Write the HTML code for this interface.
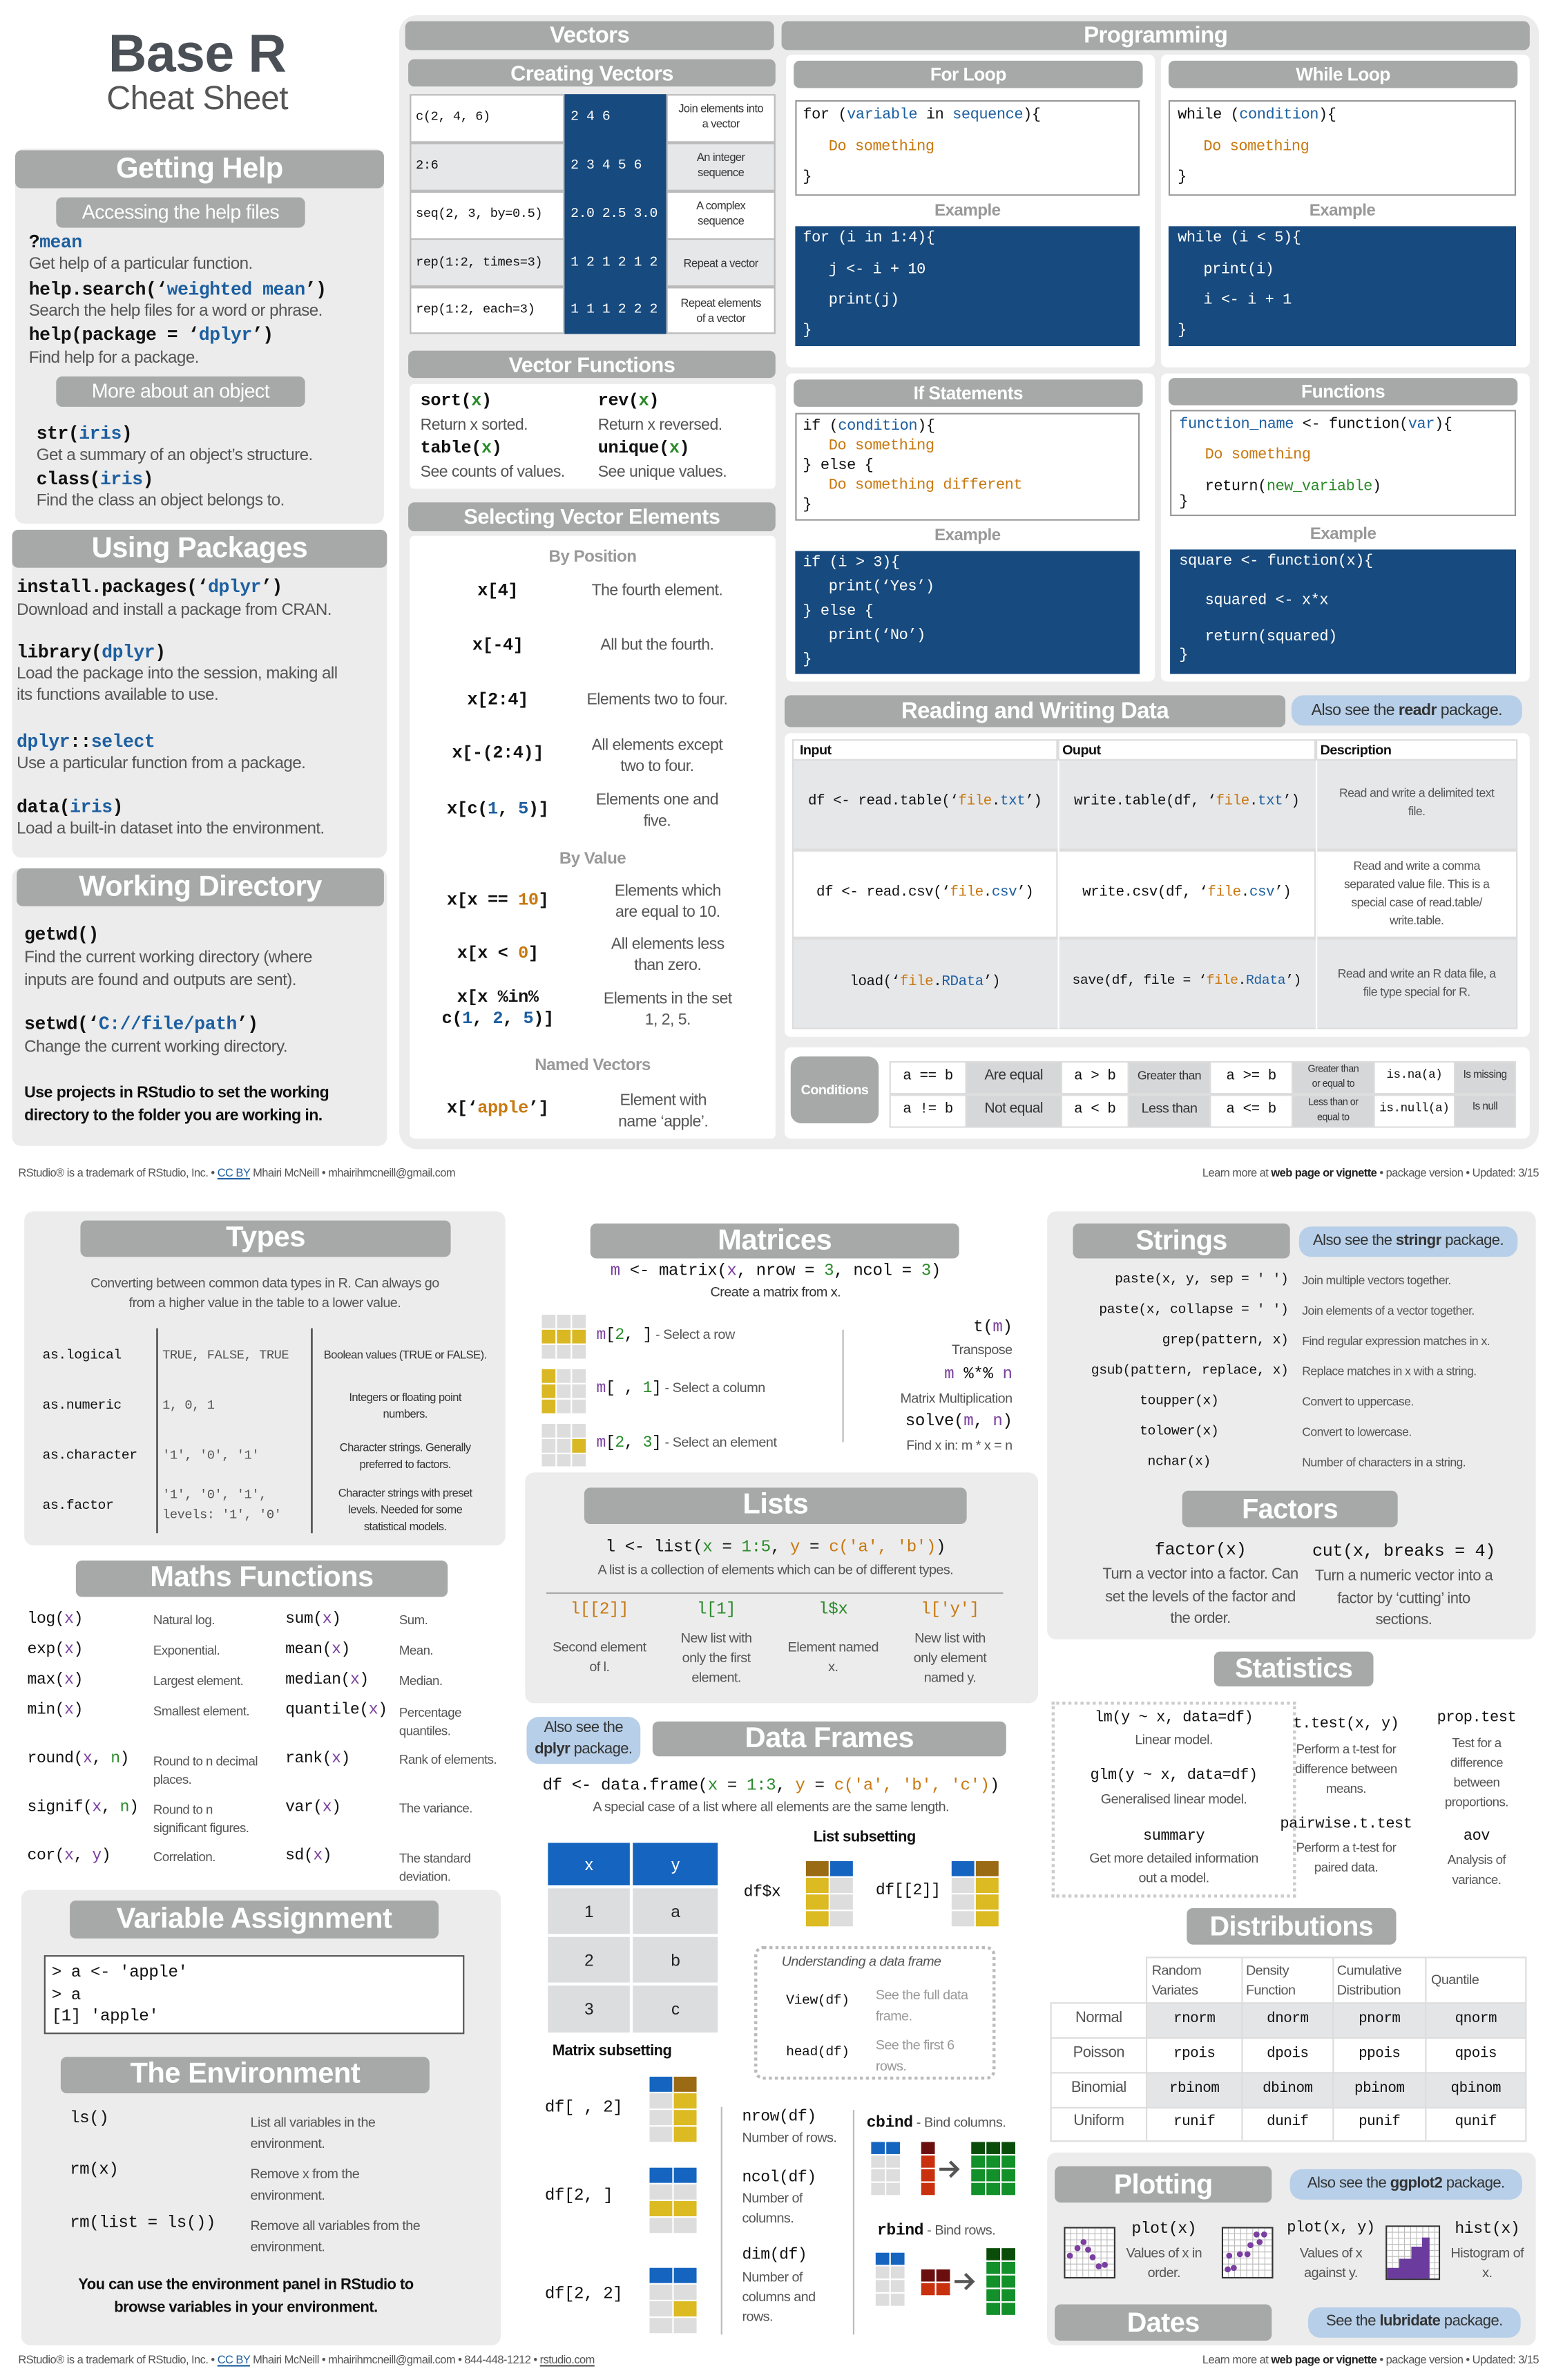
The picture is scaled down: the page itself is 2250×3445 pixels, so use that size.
<!DOCTYPE html>
<html><head><meta charset="utf-8">
<style>
html,body{margin:0;padding:0;background:#fff;width:2250px;height:3445px;overflow:hidden}
#r{position:absolute;left:0;top:0;width:1024px;height:1568px;transform:scale(2.197266);transform-origin:0 0;font-family:"Liberation Sans Narrow","Liberation Sans",sans-serif;color:#333;letter-spacing:-0.25px}
#r div{position:absolute;white-space:nowrap}
.h{background:#a6a9a8;color:#fff;font-weight:bold;text-align:center;border-radius:4px}
.p{background:#ececec;border-radius:6px}
.w{background:#fff}
.c{font-family:"Liberation Mono",monospace;color:#111;letter-spacing:-0.2px}
.d{color:#555}
.b{color:#1d5fa0}.g{color:#2a8a2a}.o{color:#c8780f}.pu{color:#7a3f9e}
.cen{text-align:center}
.see{background:#b7cfe8;border-radius:8px;color:#333;text-align:center}
.bl{background:#174a7e;color:#fff;font-family:"Liberation Mono",monospace}
</style></head><body><div id="r">

<!-- Title -->
<div style="left:40px;top:16px;width:180px;text-align:center;font-size:35px;font-weight:bold;color:#4b5057;font-family:'Liberation Sans',sans-serif">Base R</div>
<div style="left:40px;top:52px;width:180px;text-align:center;font-size:22px;color:#555">Cheat Sheet</div>

<!-- Getting Help -->
<div class="p" style="left:10px;top:98px;width:243px;height:247px"></div>
<div class="h" style="left:10px;top:99px;width:243px;height:25px;font-size:19px;line-height:25px">Getting Help</div>
<div class="h" style="left:37px;top:130px;width:164px;height:20px;font-size:13px;line-height:20px;font-weight:normal">Accessing the help files</div>
<div class="c" style="left:19px;top:153px;font-size:12px;font-weight:bold">?<span class="b">mean</span></div>
<div class="d" style="left:19px;top:168px;font-size:11px">Get help of a particular function.</div>
<div class="c" style="left:19px;top:184px;font-size:12px;font-weight:bold">help.search(‘<span class="b">weighted mean</span>’)</div>
<div class="d" style="left:19px;top:199px;font-size:11px">Search the help files for a word or phrase.</div>
<div class="c" style="left:19px;top:214px;font-size:12px;font-weight:bold">help(package = ‘<span class="b">dplyr</span>’)</div>
<div class="d" style="left:19px;top:230px;font-size:11px">Find help for a package.</div>
<div class="h" style="left:37px;top:248px;width:164px;height:20px;font-size:13px;line-height:20px;font-weight:normal">More about an object</div>
<div class="c" style="left:24px;top:279px;font-size:12px;font-weight:bold">str(<span class="b">iris</span>)</div>
<div class="d" style="left:24px;top:294px;font-size:11px">Get a summary of an object’s structure.</div>
<div class="c" style="left:24px;top:309px;font-size:12px;font-weight:bold">class(<span class="b">iris</span>)</div>
<div class="d" style="left:24px;top:324px;font-size:11px">Find the class an object belongs to.</div>

<!-- Using Packages -->
<div class="p" style="left:8px;top:349px;width:247px;height:216px"></div>
<div class="h" style="left:8px;top:349px;width:247px;height:25px;font-size:19px;line-height:25px">Using Packages</div>
<div class="c" style="left:11px;top:380px;font-size:12px;font-weight:bold">install.packages(‘<span class="b">dplyr</span>’)</div>
<div class="d" style="left:11px;top:396px;font-size:11px">Download and install a package from CRAN.</div>
<div class="c" style="left:11px;top:423px;font-size:12px;font-weight:bold">library(<span class="b">dplyr</span>)</div>
<div class="d" style="left:11px;top:438px;font-size:11px">Load the package into the session, making all</div>
<div class="d" style="left:11px;top:452px;font-size:11px">its functions available to use.</div>
<div class="c" style="left:11px;top:482px;font-size:12px;font-weight:bold"><span class="b">dplyr</span>::<span class="b">select</span></div>
<div class="d" style="left:11px;top:497px;font-size:11px">Use a particular function from a package.</div>
<div class="c" style="left:11px;top:525px;font-size:12px;font-weight:bold">data(<span class="b">iris</span>)</div>
<div class="d" style="left:11px;top:540px;font-size:11px">Load a built-in dataset into the environment.</div>

<!-- Working Directory -->
<div class="p" style="left:8px;top:572px;width:247px;height:183px"></div>
<div class="h" style="left:11px;top:572px;width:242px;height:25px;font-size:19px;line-height:25px">Working Directory</div>
<div class="c" style="left:16px;top:609px;font-size:12px;font-weight:bold">getwd()</div>
<div class="d" style="left:16px;top:625px;font-size:11px">Find the current working directory (where</div>
<div class="d" style="left:16px;top:640px;font-size:11px">inputs are found and outputs are sent).</div>
<div class="c" style="left:16px;top:668px;font-size:12px;font-weight:bold">setwd(‘<span class="b">C://file/path</span>’)</div>
<div class="d" style="left:16px;top:684px;font-size:11px">Change the current working directory.</div>
<div style="left:16px;top:714px;font-size:10.5px;font-weight:bold;color:#111;font-family:'Liberation Sans',sans-serif">Use projects in RStudio to set the working</div>
<div style="left:16px;top:729px;font-size:10.5px;font-weight:bold;color:#111;font-family:'Liberation Sans',sans-serif">directory to the folder you are working in.</div>

<!-- Big right panel -->
<div class="p" style="left:263px;top:10px;width:751px;height:747px;border-radius:12px"></div>
<div class="h" style="left:267px;top:14px;width:243px;height:19px;font-size:15px;line-height:19px">Vectors</div>
<div class="h" style="left:515px;top:14px;width:493px;height:19px;font-size:15px;line-height:19px">Programming</div>
<div class="h" style="left:269px;top:39px;width:242px;height:18px;font-size:14px;line-height:18px">Creating Vectors</div>

<!-- creating vectors table -->
<div style="left:270px;top:62px;width:241px;height:158px;background:#bbb"></div>
<div class="w" style="left:271px;top:63px;width:100px;height:30px"></div>
<div style="left:271px;top:95px;width:100px;height:30px;background:#e6e7e9"></div>
<div class="w" style="left:271px;top:127px;width:100px;height:30px"></div>
<div style="left:271px;top:158px;width:100px;height:30px;background:#e6e7e9"></div>
<div class="w" style="left:271px;top:190px;width:100px;height:29px"></div>
<div style="left:372px;top:62px;width:67px;height:158px;background:#174a7e"></div>
<div class="w" style="left:440px;top:63px;width:70px;height:30px"></div>
<div style="left:440px;top:95px;width:70px;height:30px;background:#e6e7e9"></div>
<div class="w" style="left:440px;top:127px;width:70px;height:30px"></div>
<div style="left:440px;top:158px;width:70px;height:30px;background:#e6e7e9"></div>
<div class="w" style="left:440px;top:190px;width:70px;height:29px"></div>
<div class="c" style="left:274px;top:72px;font-size:8.5px">c(2, 4, 6)</div>
<div class="c" style="left:274px;top:104px;font-size:8.5px">2:6</div>
<div class="c" style="left:274px;top:136px;font-size:8.5px">seq(2, 3, by=0.5)</div>
<div class="c" style="left:274px;top:168px;font-size:8.5px">rep(1:2, times=3)</div>
<div class="c" style="left:274px;top:199px;font-size:8.5px">rep(1:2, each=3)</div>
<div class="c" style="left:376px;top:72px;font-size:9px;color:#fff">2 4 6</div>
<div class="c" style="left:376px;top:104px;font-size:9px;color:#fff">2 3 4 5 6</div>
<div class="c" style="left:376px;top:136px;font-size:9px;color:#fff">2.0 2.5 3.0</div>
<div class="c" style="left:376px;top:168px;font-size:9px;color:#fff">1 2 1 2 1 2</div>
<div class="c" style="left:376px;top:199px;font-size:9px;color:#fff">1 1 1 2 2 2</div>
<div class="cen" style="left:440px;top:67px;width:70px;font-size:7.5px;line-height:10px">Join elements into<br>a vector</div>
<div class="cen" style="left:440px;top:99px;width:70px;font-size:7.5px;line-height:10px">An integer<br>sequence</div>
<div class="cen" style="left:440px;top:131px;width:70px;font-size:7.5px;line-height:10px">A complex<br>sequence</div>
<div class="cen" style="left:440px;top:169px;width:70px;font-size:7.5px">Repeat a vector</div>
<div class="cen" style="left:440px;top:195px;width:70px;font-size:7.5px;line-height:10px">Repeat elements<br>of a vector</div>

<!-- vector functions -->
<div class="h" style="left:269px;top:231px;width:242px;height:18px;font-size:14px;line-height:18px">Vector Functions</div>
<div class="w" style="left:270px;top:253px;width:241px;height:69px;border-radius:3px"></div>
<div class="c" style="left:277px;top:258px;font-size:11.5px;font-weight:bold">sort(<span class="g">x</span>)</div>
<div class="d" style="left:277px;top:274px;font-size:10.5px">Return x sorted.</div>
<div class="c" style="left:277px;top:289px;font-size:11.5px;font-weight:bold">table(<span class="g">x</span>)</div>
<div class="d" style="left:277px;top:305px;font-size:10.5px">See counts of values.</div>
<div class="c" style="left:394px;top:258px;font-size:11.5px;font-weight:bold">rev(<span class="g">x</span>)</div>
<div class="d" style="left:394px;top:274px;font-size:10.5px">Return x reversed.</div>
<div class="c" style="left:394px;top:289px;font-size:11.5px;font-weight:bold">unique(<span class="g">x</span>)</div>
<div class="d" style="left:394px;top:305px;font-size:10.5px">See unique values.</div>

<!-- selecting -->
<div class="h" style="left:269px;top:331px;width:242px;height:19px;font-size:14px;line-height:19px">Selecting Vector Elements</div>
<div class="w" style="left:270px;top:353px;width:241px;height:397px;border-radius:3px"></div>
<div class="cen" style="left:270px;top:361px;width:241px;font-size:11px;font-weight:bold;color:#999">By Position</div>
<div class="c cen" style="left:270px;top:383px;width:116px;font-size:11.5px;font-weight:bold">x[4]</div>
<div class="cen d" style="left:378px;top:383px;width:110px;font-size:10.5px">The fourth element.</div>
<div class="c cen" style="left:270px;top:419px;width:116px;font-size:11.5px;font-weight:bold">x[-4]</div>
<div class="cen d" style="left:378px;top:419px;width:110px;font-size:10.5px">All but the fourth.</div>
<div class="c cen" style="left:270px;top:455px;width:116px;font-size:11.5px;font-weight:bold">x[2:4]</div>
<div class="cen d" style="left:378px;top:455px;width:110px;font-size:10.5px">Elements two to four.</div>
<div class="c cen" style="left:270px;top:490px;width:116px;font-size:11.5px;font-weight:bold">x[-(2:4)]</div>
<div class="cen d" style="left:378px;top:484px;width:110px;font-size:10.5px;line-height:14px">All elements except<br>two to four.</div>
<div class="c cen" style="left:270px;top:527px;width:116px;font-size:11.5px;font-weight:bold">x[c(<span class="b">1</span>, <span class="b">5</span>)]</div>
<div class="cen d" style="left:378px;top:520px;width:110px;font-size:10.5px;line-height:14px">Elements one and<br>five.</div>
<div class="cen" style="left:270px;top:560px;width:241px;font-size:11px;font-weight:bold;color:#999">By Value</div>
<div class="c cen" style="left:270px;top:587px;width:116px;font-size:11.5px;font-weight:bold">x[x == <span class="o">10</span>]</div>
<div class="cen d" style="left:385px;top:580px;width:110px;font-size:10.5px;line-height:14px">Elements which<br>are equal to 10.</div>
<div class="c cen" style="left:270px;top:622px;width:116px;font-size:11.5px;font-weight:bold">x[x &lt; <span class="o">0</span>]</div>
<div class="cen d" style="left:385px;top:615px;width:110px;font-size:10.5px;line-height:14px">All elements less<br>than zero.</div>
<div class="c cen" style="left:270px;top:651px;width:116px;font-size:11.5px;font-weight:bold;line-height:14px">x[x %in%<br>c(<span class="b">1</span>, <span class="b">2</span>, <span class="b">5</span>)]</div>
<div class="cen d" style="left:385px;top:651px;width:110px;font-size:10.5px;line-height:14px">Elements in the set<br>1, 2, 5.</div>
<div class="cen" style="left:270px;top:696px;width:241px;font-size:11px;font-weight:bold;color:#999">Named Vectors</div>
<div class="c cen" style="left:270px;top:724px;width:116px;font-size:11.5px;font-weight:bold">x[‘<span class="o">apple</span>’]</div>
<div class="cen d" style="left:382px;top:718px;width:110px;font-size:10.5px;line-height:14px">Element with<br>name ‘apple’.</div>

<!-- Programming panels -->
<div class="w" style="left:518px;top:36px;width:243px;height:206px;border-radius:4px"></div>
<div class="w" style="left:765px;top:36px;width:243px;height:206px;border-radius:4px"></div>
<div class="w" style="left:518px;top:246px;width:243px;height:203px;border-radius:4px"></div>
<div class="w" style="left:765px;top:246px;width:243px;height:203px;border-radius:4px"></div>

<div class="h" style="left:523px;top:40px;width:230px;height:18px;font-size:12px;line-height:18px">For Loop</div>
<div style="left:524px;top:66px;width:225px;height:61px;border:1px solid #999"></div>
<div class="c" style="left:529px;top:71px;font-size:10px">for (<span class="b">variable</span> in <span class="b">sequence</span>){</div>
<div class="c o" style="left:546px;top:92px;font-size:10px">Do something</div>
<div class="c" style="left:529px;top:112px;font-size:10px">}</div>
<div class="cen" style="left:524px;top:133px;width:227px;font-size:11px;font-weight:bold;color:#999">Example</div>
<div class="bl" style="left:524px;top:149px;width:227px;height:79px"></div>
<div class="c" style="left:529px;top:152px;font-size:10px;color:#fff">for (i in 1:4){</div>
<div class="c" style="left:546px;top:173px;font-size:10px;color:#fff">j &lt;- i + 10</div>
<div class="c" style="left:546px;top:193px;font-size:10px;color:#fff">print(j)</div>
<div class="c" style="left:529px;top:213px;font-size:10px;color:#fff">}</div>

<div class="h" style="left:770px;top:40px;width:230px;height:18px;font-size:12px;line-height:18px">While Loop</div>
<div style="left:770px;top:66px;width:227px;height:61px;border:1px solid #999"></div>
<div class="c" style="left:776px;top:71px;font-size:10px">while (<span class="b">condition</span>){</div>
<div class="c o" style="left:793px;top:92px;font-size:10px">Do something</div>
<div class="c" style="left:776px;top:112px;font-size:10px">}</div>
<div class="cen" style="left:770px;top:133px;width:229px;font-size:11px;font-weight:bold;color:#999">Example</div>
<div class="bl" style="left:770px;top:149px;width:229px;height:79px"></div>
<div class="c" style="left:776px;top:152px;font-size:10px;color:#fff">while (i &lt; 5){</div>
<div class="c" style="left:793px;top:173px;font-size:10px;color:#fff">print(i)</div>
<div class="c" style="left:793px;top:193px;font-size:10px;color:#fff">i &lt;- i + 1</div>
<div class="c" style="left:776px;top:213px;font-size:10px;color:#fff">}</div>

<div class="h" style="left:523px;top:250px;width:230px;height:18px;font-size:12px;line-height:18px">If Statements</div>
<div style="left:524px;top:272px;width:225px;height:69px;border:1px solid #999"></div>
<div class="c" style="left:529px;top:276px;font-size:10px">if (<span class="b">condition</span>){</div>
<div class="c o" style="left:546px;top:289px;font-size:10px">Do something</div>
<div class="c" style="left:529px;top:302px;font-size:10px">} else {</div>
<div class="c o" style="left:546px;top:315px;font-size:10px">Do something different</div>
<div class="c" style="left:529px;top:328px;font-size:10px">}</div>
<div class="cen" style="left:524px;top:347px;width:227px;font-size:11px;font-weight:bold;color:#999">Example</div>
<div class="bl" style="left:524px;top:363px;width:227px;height:81px"></div>
<div class="c" style="left:529px;top:366px;font-size:10px;color:#fff">if (i &gt; 3){</div>
<div class="c" style="left:546px;top:382px;font-size:10px;color:#fff">print(‘Yes’)</div>
<div class="c" style="left:529px;top:398px;font-size:10px;color:#fff">} else {</div>
<div class="c" style="left:546px;top:414px;font-size:10px;color:#fff">print(‘No’)</div>
<div class="c" style="left:529px;top:430px;font-size:10px;color:#fff">}</div>

<div class="h" style="left:770px;top:249px;width:230px;height:18px;font-size:12px;line-height:18px">Functions</div>
<div style="left:771px;top:270px;width:226px;height:68px;border:1px solid #999"></div>
<div class="c" style="left:777px;top:275px;font-size:10px"><span class="b">function_name</span> &lt;- function(<span class="b">var</span>){</div>
<div class="c o" style="left:794px;top:295px;font-size:10px">Do something</div>
<div class="c" style="left:794px;top:316px;font-size:10px">return(<span class="g">new_variable</span>)</div>
<div class="c" style="left:777px;top:326px;font-size:10px">}</div>
<div class="cen" style="left:771px;top:346px;width:228px;font-size:11px;font-weight:bold;color:#999">Example</div>
<div class="bl" style="left:771px;top:362px;width:228px;height:82px"></div>
<div class="c" style="left:777px;top:365px;font-size:10px;color:#fff">square &lt;- function(x){</div>
<div class="c" style="left:794px;top:391px;font-size:10px;color:#fff">squared &lt;- x*x</div>
<div class="c" style="left:794px;top:415px;font-size:10px;color:#fff">return(squared)</div>
<div class="c" style="left:777px;top:427px;font-size:10px;color:#fff">}</div>

<!-- Reading and Writing -->
<div class="w" style="left:517px;top:483px;width:491px;height:200px;border-radius:4px"></div>
<div class="h" style="left:517px;top:458px;width:330px;height:21px;font-size:15px;line-height:21px">Reading and Writing Data</div>
<div class="see" style="left:851px;top:458px;width:152px;height:20px;font-size:10.5px;line-height:20px">Also see the <b>readr</b> package.</div>
<div style="left:522px;top:487px;width:478px;height:191px;background:#ddd"></div>
<div class="w" style="left:523px;top:488px;width:173px;height:12px"></div>
<div class="w" style="left:698px;top:488px;width:168px;height:12px"></div>
<div class="w" style="left:868px;top:488px;width:131px;height:12px"></div>
<div style="left:523px;top:501px;width:476px;height:58px;background:#e6e7e9"></div>
<div class="w" style="left:523px;top:561px;width:173px;height:56px"></div>
<div class="w" style="left:698px;top:561px;width:168px;height:56px"></div>
<div class="w" style="left:868px;top:561px;width:131px;height:56px"></div>
<div style="left:523px;top:619px;width:476px;height:58px;background:#e6e7e9"></div>
<div style="left:697px;top:501px;width:1px;height:177px;background:#fff"></div>
<div style="left:867px;top:501px;width:1px;height:177px;background:#fff"></div>
<div style="left:527px;top:489px;font-size:9px;font-weight:bold;color:#111">Input</div>
<div style="left:700px;top:489px;font-size:9px;font-weight:bold;color:#111">Ouput</div>
<div style="left:870px;top:489px;font-size:9px;font-weight:bold;color:#111">Description</div>
<div class="c cen" style="left:523px;top:522px;width:173px;font-size:9.5px">df &lt;- read.table(‘<span class="o">file</span>.<span class="b">txt</span>’)</div>
<div class="c cen" style="left:698px;top:522px;width:168px;font-size:9.5px">write.table(df, ‘<span class="o">file</span>.<span class="b">txt</span>’)</div>
<div class="c cen" style="left:523px;top:582px;width:173px;font-size:9.5px">df &lt;- read.csv(‘<span class="o">file</span>.<span class="b">csv</span>’)</div>
<div class="c cen" style="left:698px;top:582px;width:168px;font-size:9.5px">write.csv(df, ‘<span class="o">file</span>.<span class="b">csv</span>’)</div>
<div class="c cen" style="left:523px;top:641px;width:173px;font-size:9.5px">load(‘<span class="o">file</span>.<span class="b">RData</span>’)</div>
<div class="c cen" style="left:698px;top:641px;width:168px;font-size:9px">save(df, file = ‘<span class="o">file</span>.<span class="b">Rdata</span>’)</div>
<div class="cen d" style="left:868px;top:517px;width:131px;font-size:8px;line-height:12px">Read and write a delimited text<br>file.</div>
<div class="cen d" style="left:868px;top:565px;width:131px;font-size:8px;line-height:12px">Read and write a comma<br>separated value file. This is a<br>special case of read.table/<br>write.table.</div>
<div class="cen d" style="left:868px;top:636px;width:131px;font-size:8px;line-height:12px">Read and write an R data file, a<br>file type special for R.</div>

<!-- conditions -->
<div class="w" style="left:517px;top:690px;width:491px;height:60px;border-radius:4px"></div>
<div class="h" style="left:521px;top:696px;width:58px;height:44px;font-size:9px;line-height:44px;border-radius:7px">Conditions</div>
<div style="left:586px;top:699px;width:413px;height:44px;background:#ddd"></div>
<div class="w" style="left:587px;top:700px;width:49px;height:20px"></div><div style="left:637px;top:700px;width:62px;height:20px;background:#d6d7d8"></div>
<div class="w" style="left:700px;top:700px;width:43px;height:20px"></div><div style="left:744px;top:700px;width:53px;height:20px;background:#d6d7d8"></div>
<div class="w" style="left:798px;top:700px;width:53px;height:20px"></div><div style="left:852px;top:700px;width:53px;height:20px;background:#d6d7d8"></div>
<div class="w" style="left:906px;top:700px;width:52px;height:20px"></div><div style="left:959px;top:700px;width:39px;height:20px;background:#d6d7d8"></div>
<div class="w" style="left:587px;top:722px;width:49px;height:20px"></div><div style="left:637px;top:722px;width:62px;height:20px;background:#d6d7d8"></div>
<div class="w" style="left:700px;top:722px;width:43px;height:20px"></div><div style="left:744px;top:722px;width:53px;height:20px;background:#d6d7d8"></div>
<div class="w" style="left:798px;top:722px;width:53px;height:20px"></div><div style="left:852px;top:722px;width:53px;height:20px;background:#d6d7d8"></div>
<div class="w" style="left:906px;top:722px;width:52px;height:20px"></div><div style="left:959px;top:722px;width:39px;height:20px;background:#d6d7d8"></div>
<div class="c cen" style="left:587px;top:703px;width:49px;font-size:9.5px">a == b</div>
<div class="cen" style="left:637px;top:703px;width:62px;font-size:9.5px">Are equal</div>
<div class="c cen" style="left:700px;top:703px;width:43px;font-size:9.5px">a &gt; b</div>
<div class="cen" style="left:744px;top:704px;width:53px;font-size:8px">Greater than</div>
<div class="c cen" style="left:798px;top:703px;width:53px;font-size:9.5px">a &gt;= b</div>
<div class="cen" style="left:852px;top:700px;width:53px;font-size:6.5px;line-height:10px">Greater than<br>or equal to</div>
<div class="c cen" style="left:906px;top:704px;width:52px;font-size:8px">is.na(a)</div>
<div class="cen" style="left:959px;top:705px;width:39px;font-size:7px">Is missing</div>
<div class="c cen" style="left:587px;top:725px;width:49px;font-size:9.5px">a != b</div>
<div class="cen" style="left:637px;top:725px;width:62px;font-size:9.5px">Not equal</div>
<div class="c cen" style="left:700px;top:725px;width:43px;font-size:9.5px">a &lt; b</div>
<div class="cen" style="left:744px;top:725px;width:53px;font-size:9px">Less than</div>
<div class="c cen" style="left:798px;top:725px;width:53px;font-size:9.5px">a &lt;= b</div>
<div class="cen" style="left:852px;top:722px;width:53px;font-size:6.5px;line-height:10px">Less than or<br>equal to</div>
<div class="c cen" style="left:906px;top:726px;width:52px;font-size:8px">is.null(a)</div>
<div class="cen" style="left:959px;top:726px;width:39px;font-size:7px">Is null</div>

<!-- footer top -->
<div class="d" style="left:12px;top:768px;font-size:7.5px">RStudio® is a trademark of RStudio, Inc. • <u class="b">CC BY</u> Mhairi McNeill • mhairihmcneill@gmail.com</div>
<div class="d" style="left:700px;top:768px;width:314px;text-align:right;font-size:7.5px">Learn more at <b style="color:#222">web page or vignette</b> • package version • Updated: 3/15</div>

<!-- ============ PAGE 2 ============ -->
<!-- Types -->
<div class="p" style="left:16px;top:798px;width:317px;height:220px"></div>
<div class="h" style="left:53px;top:804px;width:244px;height:24px;font-size:19px;line-height:24px">Types</div>
<div class="cen d" style="left:16px;top:839px;width:317px;font-size:9px;line-height:13px">Converting between common data types in R. Can always go<br>from a higher value in the table to a lower value.</div>
<div style="left:103px;top:875px;width:1px;height:135px;background:#333"></div>
<div style="left:205px;top:875px;width:1px;height:135px;background:#333"></div>
<div class="c" style="left:28px;top:888px;font-size:9px">as.logical</div>
<div class="c" style="left:28px;top:921px;font-size:9px">as.numeric</div>
<div class="c" style="left:28px;top:954px;font-size:9px">as.character</div>
<div class="c" style="left:28px;top:987px;font-size:9px">as.factor</div>
<div class="c d" style="left:107px;top:888px;font-size:8.5px">TRUE, FALSE, TRUE</div>
<div class="c d" style="left:107px;top:921px;font-size:8.5px">1, 0, 1</div>
<div class="c d" style="left:107px;top:954px;font-size:8.5px">'1', '0', '1'</div>
<div class="c d" style="left:107px;top:979px;font-size:8.5px;line-height:13px">'1', '0', '1',<br>levels: '1', '0'</div>
<div class="cen" style="left:206px;top:888px;width:122px;font-size:7.5px">Boolean values (TRUE or FALSE).</div>
<div class="cen" style="left:206px;top:915px;width:122px;font-size:7.5px;line-height:11px">Integers or floating point<br>numbers.</div>
<div class="cen" style="left:206px;top:948px;width:122px;font-size:7.5px;line-height:11px">Character strings. Generally<br>preferred to factors.</div>
<div class="cen" style="left:206px;top:978px;width:122px;font-size:7.5px;line-height:11px">Character strings with preset<br>levels. Needed for some<br>statistical models.</div>

<!-- Maths -->
<div class="h" style="left:50px;top:1028px;width:245px;height:24px;font-size:19px;line-height:24px">Maths Functions</div>
<div class="c" style="left:18px;top:1061px;font-size:10.5px;line-height:12px">log(<span class="pu">x</span>)</div>
<div class="c" style="left:18px;top:1081px;font-size:10.5px">exp(<span class="pu">x</span>)</div>
<div class="c" style="left:18px;top:1101px;font-size:10.5px">max(<span class="pu">x</span>)</div>
<div class="c" style="left:18px;top:1121px;font-size:10.5px">min(<span class="pu">x</span>)</div>
<div class="c" style="left:18px;top:1153px;font-size:10.5px">round(<span class="pu">x</span>, <span class="g">n</span>)</div>
<div class="c" style="left:18px;top:1185px;font-size:10.5px">signif(<span class="pu">x</span>, <span class="g">n</span>)</div>
<div class="c" style="left:18px;top:1217px;font-size:10.5px">cor(<span class="pu">x</span>, <span class="pu">y</span>)</div>
<div class="d" style="left:101px;top:1062px;font-size:8.5px">Natural log.</div>
<div class="d" style="left:101px;top:1082px;font-size:8.5px">Exponential.</div>
<div class="d" style="left:101px;top:1102px;font-size:8.5px">Largest element.</div>
<div class="d" style="left:101px;top:1122px;font-size:8.5px">Smallest element.</div>
<div class="d" style="left:101px;top:1154px;font-size:8.5px;line-height:12px">Round to n decimal<br>places.</div>
<div class="d" style="left:101px;top:1186px;font-size:8.5px;line-height:12px">Round to n<br>significant figures.</div>
<div class="d" style="left:101px;top:1218px;font-size:8.5px">Correlation.</div>
<div class="c" style="left:188px;top:1061px;font-size:10.5px">sum(<span class="pu">x</span>)</div>
<div class="c" style="left:188px;top:1081px;font-size:10.5px">mean(<span class="pu">x</span>)</div>
<div class="c" style="left:188px;top:1101px;font-size:10.5px">median(<span class="pu">x</span>)</div>
<div class="c" style="left:188px;top:1121px;font-size:10.5px">quantile(<span class="pu">x</span>)</div>
<div class="c" style="left:188px;top:1153px;font-size:10.5px">rank(<span class="pu">x</span>)</div>
<div class="c" style="left:188px;top:1185px;font-size:10.5px">var(<span class="pu">x</span>)</div>
<div class="c" style="left:188px;top:1217px;font-size:10.5px">sd(<span class="pu">x</span>)</div>
<div class="d" style="left:263px;top:1062px;font-size:8.5px">Sum.</div>
<div class="d" style="left:263px;top:1082px;font-size:8.5px">Mean.</div>
<div class="d" style="left:263px;top:1102px;font-size:8.5px">Median.</div>
<div class="d" style="left:263px;top:1122px;font-size:8.5px;line-height:12px">Percentage<br>quantiles.</div>
<div class="d" style="left:263px;top:1154px;font-size:8.5px">Rank of elements.</div>
<div class="d" style="left:263px;top:1186px;font-size:8.5px">The variance.</div>
<div class="d" style="left:263px;top:1218px;font-size:8.5px;line-height:12px">The standard<br>deviation.</div>

<!-- Variable assignment / environment -->
<div class="p" style="left:14px;top:1245px;width:316px;height:300px"></div>
<div class="h" style="left:46px;top:1252px;width:243px;height:25px;font-size:19px;line-height:25px">Variable Assignment</div>
<div class="w" style="left:29px;top:1288px;width:275px;height:50px;border:1px solid #555"></div>
<div class="c" style="left:34px;top:1293px;font-size:11px;line-height:14.5px">&gt; a &lt;- 'apple'<br>&gt; a<br>[1] 'apple'</div>
<div class="h" style="left:40px;top:1355px;width:243px;height:24px;font-size:19px;line-height:24px">The Environment</div>
<div class="c" style="left:46px;top:1390px;font-size:11px">ls()</div>
<div class="c" style="left:46px;top:1424px;font-size:11px">rm(x)</div>
<div class="c" style="left:46px;top:1459px;font-size:11px">rm(list = ls())</div>
<div class="d" style="left:165px;top:1391px;font-size:9px;line-height:14px">List all variables in the<br>environment.</div>
<div class="d" style="left:165px;top:1425px;font-size:9px;line-height:14px">Remove x from the<br>environment.</div>
<div class="d" style="left:165px;top:1459px;font-size:9px;line-height:14px">Remove all variables from the<br>environment.</div>
<div class="cen" style="left:14px;top:1498px;width:296px;font-size:10px;font-weight:bold;color:#111;line-height:15px">You can use the environment panel in RStudio to<br>browse variables in your environment.</div>

<!-- Matrices -->
<div class="h" style="left:389px;top:806px;width:243px;height:23px;font-size:19px;line-height:23px">Matrices</div>
<div class="c cen" style="left:360px;top:832px;width:302px;font-size:11px"><span class="pu">m</span> &lt;- matrix(<span class="pu">x</span>, nrow = <span class="g">3</span>, ncol = <span class="g">3</span>)</div>
<div class="cen" style="left:360px;top:846px;width:302px;font-size:9px">Create a matrix from x.</div>
<svg style="position:absolute;left:357px;top:866px" width="30" height="100" viewBox="0 0 30 100">
<g fill="#ddd"><rect x="0" y="0" width="9" height="9"/><rect x="10" y="0" width="9" height="9"/><rect x="20" y="0" width="9" height="9"/>
<rect x="0" y="20" width="9" height="9"/><rect x="10" y="20" width="9" height="9"/><rect x="20" y="20" width="9" height="9"/>
<rect x="10" y="36" width="9" height="9"/><rect x="20" y="36" width="9" height="9"/><rect x="10" y="46" width="9" height="9"/><rect x="20" y="46" width="9" height="9"/><rect x="10" y="56" width="9" height="9"/><rect x="20" y="56" width="9" height="9"/>
<rect x="0" y="72" width="9" height="9"/><rect x="10" y="72" width="9" height="9"/><rect x="20" y="72" width="9" height="9"/><rect x="0" y="82" width="9" height="9"/><rect x="10" y="82" width="9" height="9"/><rect x="0" y="92" width="9" height="8"/><rect x="10" y="92" width="9" height="8"/><rect x="20" y="92" width="9" height="8"/></g>
<g fill="#d9b823"><rect x="0" y="10" width="9" height="9"/><rect x="10" y="10" width="9" height="9"/><rect x="20" y="10" width="9" height="9"/>
<rect x="0" y="36" width="9" height="9"/><rect x="0" y="46" width="9" height="9"/><rect x="0" y="56" width="9" height="9"/><rect x="20" y="82" width="9" height="9"/></g></svg>
<div class="c" style="left:393px;top:874px;font-size:10.5px"><span class="pu">m</span>[<span class="g">2</span>, ]<span style="font-family:'Liberation Sans Narrow','Liberation Sans',sans-serif;color:#555;font-size:9px"> - Select a row</span></div>
<div class="c" style="left:393px;top:909px;font-size:10.5px"><span class="pu">m</span>[ , <span class="g">1</span>]<span style="font-family:'Liberation Sans Narrow','Liberation Sans',sans-serif;color:#555;font-size:9px"> - Select a column</span></div>
<div class="c" style="left:393px;top:945px;font-size:10.5px"><span class="pu">m</span>[<span class="g">2</span>, <span class="g">3</span>]<span style="font-family:'Liberation Sans Narrow','Liberation Sans',sans-serif;color:#555;font-size:9px"> - Select an element</span></div>
<div style="left:555px;top:876px;width:1px;height:74px;background:#bbb"></div>
<div class="c" style="left:560px;top:869px;width:107px;text-align:right;font-size:11px">t(<span class="pu">m</span>)</div>
<div class="d" style="left:560px;top:884px;width:107px;text-align:right;font-size:9px">Transpose</div>
<div class="c" style="left:560px;top:900px;width:107px;text-align:right;font-size:11px"><span class="pu">m</span> %*% <span class="pu">n</span></div>
<div class="d" style="left:560px;top:916px;width:107px;text-align:right;font-size:9px">Matrix Multiplication</div>
<div class="c" style="left:560px;top:931px;width:107px;text-align:right;font-size:11px">solve(<span class="pu">m</span>, <span class="pu">n</span>)</div>
<div class="d" style="left:560px;top:947px;width:107px;text-align:right;font-size:9px">Find x in: m * x = n</div>

<!-- Lists -->
<div class="p" style="left:346px;top:970px;width:338px;height:152px"></div>
<div class="h" style="left:385px;top:980px;width:252px;height:24px;font-size:19px;line-height:24px">Lists</div>
<div class="c cen" style="left:346px;top:1014px;width:330px;font-size:11px">l &lt;- list(<span class="g">x</span> = <span class="g">1:5</span>, <span class="o">y</span> = <span class="o">c('a', 'b')</span>)</div>
<div class="cen d" style="left:346px;top:1029px;width:330px;font-size:9px">A list is a collection of elements which can be of different types.</div>
<div style="left:360px;top:1049px;width:301px;height:1px;background:#aaa"></div>
<div class="c cen o" style="left:355px;top:1055px;width:80px;font-size:11px">l[[2]]</div>
<div class="c cen g" style="left:432px;top:1055px;width:80px;font-size:11px">l[1]</div>
<div class="c cen g" style="left:509px;top:1055px;width:80px;font-size:11px">l$x</div>
<div class="c cen o" style="left:586px;top:1055px;width:80px;font-size:11px">l['y']</div>
<div class="cen d" style="left:355px;top:1079px;width:80px;font-size:9px;line-height:13px">Second element<br>of l.</div>
<div class="cen d" style="left:432px;top:1073px;width:80px;font-size:9px;line-height:13px">New list with<br>only the first<br>element.</div>
<div class="cen d" style="left:509px;top:1079px;width:80px;font-size:9px;line-height:13px">Element named<br>x.</div>
<div class="cen d" style="left:586px;top:1073px;width:80px;font-size:9px;line-height:13px">New list with<br>only element<br>named y.</div>

<!-- Data Frames -->
<div class="see" style="left:347px;top:1131px;width:75px;height:30px;font-size:10px;line-height:14px;padding-top:1px">Also see the<br><b>dplyr</b> package.</div>
<div class="h" style="left:430px;top:1134px;width:233px;height:23px;font-size:19px;line-height:23px">Data Frames</div>
<div class="c cen" style="left:340px;top:1171px;width:336px;font-size:11px">df &lt;- data.frame(<span class="g">x</span> = <span class="g">1:3</span>, <span class="o">y</span> = <span class="o">c('a', 'b', 'c')</span>)</div>
<div class="cen d" style="left:340px;top:1185px;width:336px;font-size:9px">A special case of a list where all elements are the same length.</div>
<svg style="position:absolute;left:361px;top:1214px" width="112" height="125" viewBox="0 0 112 125">
<rect x="0" y="0" width="54" height="28" fill="#1565c0"/><rect x="56" y="0" width="56" height="28" fill="#1565c0"/>
<g fill="#dcdddf"><rect x="0" y="30" width="54" height="30"/><rect x="56" y="30" width="56" height="30"/><rect x="0" y="62" width="54" height="30"/><rect x="56" y="62" width="56" height="30"/><rect x="0" y="94" width="54" height="31"/><rect x="56" y="94" width="56" height="31"/></g>
<g font-family="Liberation Sans Narrow, Liberation Sans, sans-serif" font-size="11" text-anchor="middle"><text x="27" y="18" fill="#fff">x</text><text x="84" y="18" fill="#fff">y</text>
<text x="27" y="49" fill="#222">1</text><text x="84" y="49" fill="#222">a</text><text x="27" y="81" fill="#222">2</text><text x="84" y="81" fill="#222">b</text><text x="27" y="113" fill="#222">3</text><text x="84" y="113" fill="#222">c</text></g></svg>
<div style="left:536px;top:1205px;font-size:10px;font-weight:bold;color:#111">List subsetting</div>
<div class="c" style="left:490px;top:1241px;font-size:10.5px">df$x</div>
<div class="c" style="left:577px;top:1240px;font-size:10.5px">df[[2]]</div>
<svg style="position:absolute;left:531px;top:1226px" width="32" height="44"><rect x="0" y="0" width="15" height="10" fill="#9a6a14"/><rect x="16" y="0" width="15" height="10" fill="#1565c0"/>
<g fill="#dbba22"><rect x="0" y="11" width="15" height="10"/><rect x="0" y="22" width="15" height="10"/><rect x="0" y="33" width="15" height="10"/></g><g fill="#ddd"><rect x="16" y="11" width="15" height="10"/><rect x="16" y="22" width="15" height="10"/><rect x="16" y="33" width="15" height="10"/></g></svg>
<svg style="position:absolute;left:627px;top:1226px" width="32" height="44"><rect x="0" y="0" width="15" height="10" fill="#1565c0"/><rect x="16" y="0" width="15" height="10" fill="#9a6a14"/>
<g fill="#ddd"><rect x="0" y="11" width="15" height="10"/><rect x="0" y="22" width="15" height="10"/><rect x="0" y="33" width="15" height="10"/></g><g fill="#dbba22"><rect x="16" y="11" width="15" height="10"/><rect x="16" y="22" width="15" height="10"/><rect x="16" y="33" width="15" height="10"/></g></svg>
<div style="left:497px;top:1282px;width:155px;height:84px;border:2px dotted #bbb;border-radius:6px"></div>
<div class="d" style="left:515px;top:1287px;font-size:9px;font-style:italic">Understanding a data frame</div>
<div class="c" style="left:518px;top:1313px;font-size:9px">View(df)</div>
<div class="c" style="left:518px;top:1347px;font-size:9px">head(df)</div>
<div style="left:577px;top:1307px;font-size:9px;color:#999;line-height:14px">See the full data<br>frame.</div>
<div style="left:577px;top:1340px;font-size:9px;color:#999;line-height:14px">See the first 6<br>rows.</div>
<div style="left:364px;top:1346px;font-size:10px;font-weight:bold;color:#111">Matrix subsetting</div>
<div class="c" style="left:359px;top:1383px;font-size:11px">df[ , 2]</div>
<div class="c" style="left:359px;top:1441px;font-size:11px">df[2, ]</div>
<div class="c" style="left:359px;top:1506px;font-size:11px">df[2, 2]</div>
<svg style="position:absolute;left:428px;top:1368px" width="32" height="170">
<rect x="0" y="0" width="15" height="10" fill="#1565c0"/><rect x="16" y="0" width="15" height="10" fill="#9a6a14"/>
<g fill="#ddd"><rect x="0" y="11" width="15" height="10"/><rect x="0" y="22" width="15" height="10"/><rect x="0" y="33" width="15" height="10"/></g>
<g fill="#dbba22"><rect x="16" y="11" width="15" height="10"/><rect x="16" y="22" width="15" height="10"/><rect x="16" y="33" width="15" height="10"/></g>
<rect x="0" y="60" width="15" height="10" fill="#1565c0"/><rect x="16" y="60" width="15" height="10" fill="#1565c0"/>
<g fill="#ddd"><rect x="0" y="71" width="15" height="10"/><rect x="16" y="71" width="15" height="10"/><rect x="0" y="93" width="15" height="10"/><rect x="16" y="93" width="15" height="10"/></g>
<rect x="0" y="82" width="15" height="10" fill="#dbba22"/><rect x="16" y="82" width="15" height="10" fill="#dbba22"/>
<rect x="0" y="126" width="15" height="10" fill="#1565c0"/><rect x="16" y="126" width="15" height="10" fill="#1565c0"/>
<g fill="#ddd"><rect x="0" y="137" width="15" height="10"/><rect x="16" y="137" width="15" height="10"/><rect x="0" y="148" width="15" height="10"/><rect x="0" y="159" width="15" height="10"/><rect x="16" y="159" width="15" height="10"/></g>
<rect x="16" y="148" width="15" height="10" fill="#dbba22"/></svg>
<div style="left:475px;top:1388px;width:1px;height:150px;background:#bbb"></div>
<div style="left:562px;top:1390px;width:1px;height:148px;background:#bbb"></div>
<div class="c" style="left:489px;top:1389px;font-size:10.5px">nrow(df)</div>
<div class="d" style="left:489px;top:1403px;font-size:9px">Number of rows.</div>
<div class="c" style="left:489px;top:1429px;font-size:10.5px">ncol(df)</div>
<div class="d" style="left:489px;top:1442px;font-size:9px;line-height:13px">Number of<br>columns.</div>
<div class="c" style="left:489px;top:1480px;font-size:10.5px">dim(df)</div>
<div class="d" style="left:489px;top:1494px;font-size:9px;line-height:13px">Number of<br>columns and<br>rows.</div>
<div class="c" style="left:571px;top:1393px;font-size:10.5px;font-weight:bold">cbind<span class="d" style="font-family:'Liberation Sans Narrow','Liberation Sans',sans-serif;font-weight:normal;font-size:9px"> - Bind columns.</span></div>
<div class="c" style="left:578px;top:1464px;font-size:10.5px;font-weight:bold">rbind<span class="d" style="font-family:'Liberation Sans Narrow','Liberation Sans',sans-serif;font-weight:normal;font-size:9px"> - Bind rows.</span></div>
<svg style="position:absolute;left:574px;top:1411px" width="96" height="116">
<rect x="0" y="0" width="9" height="8" fill="#1565c0"/><rect x="10" y="0" width="9" height="8" fill="#1565c0"/>
<g fill="#ddd"><rect x="0" y="9" width="9" height="8"/><rect x="10" y="9" width="9" height="8"/><rect x="0" y="18" width="9" height="8"/><rect x="10" y="18" width="9" height="8"/><rect x="0" y="27" width="9" height="8"/><rect x="10" y="27" width="9" height="8"/></g>
<rect x="33" y="0" width="9" height="8" fill="#6b0e0e"/><g fill="#c9300e"><rect x="33" y="9" width="9" height="8"/><rect x="33" y="18" width="9" height="8"/><rect x="33" y="27" width="9" height="8"/></g>
<path d="M45 18 H56 M52 13 L57 18 L52 23" stroke="#555" stroke-width="2" fill="none"/>
<g fill="#0a4d0a"><rect x="66" y="0" width="9" height="8"/><rect x="76" y="0" width="9" height="8"/><rect x="86" y="0" width="9" height="8"/></g>
<g fill="#12902a"><rect x="66" y="9" width="9" height="8"/><rect x="76" y="9" width="9" height="8"/><rect x="86" y="9" width="9" height="8"/><rect x="66" y="18" width="9" height="8"/><rect x="76" y="18" width="9" height="8"/><rect x="86" y="18" width="9" height="8"/><rect x="66" y="27" width="9" height="8"/><rect x="76" y="27" width="9" height="8"/><rect x="86" y="27" width="9" height="8"/></g>
<rect x="3" y="73" width="9" height="8" fill="#1565c0"/><rect x="13" y="73" width="9" height="8" fill="#1565c0"/>
<g fill="#ddd"><rect x="3" y="82" width="9" height="8"/><rect x="13" y="82" width="9" height="8"/><rect x="3" y="91" width="9" height="8"/><rect x="13" y="91" width="9" height="8"/><rect x="3" y="100" width="9" height="8"/><rect x="13" y="100" width="9" height="8"/></g>
<rect x="33" y="84" width="9" height="8" fill="#6b0e0e"/><rect x="43" y="84" width="9" height="8" fill="#6b0e0e"/><rect x="33" y="93" width="9" height="8" fill="#c9300e"/><rect x="43" y="93" width="9" height="8" fill="#c9300e"/>
<path d="M55 92 H66 M62 87 L67 92 L62 97" stroke="#555" stroke-width="2" fill="none"/>
<rect x="76" y="70" width="9" height="8" fill="#0a4d0a"/><rect x="86" y="70" width="9" height="8" fill="#0a4d0a"/>
<g fill="#12902a"><rect x="76" y="79" width="9" height="8"/><rect x="86" y="79" width="9" height="8"/><rect x="76" y="88" width="9" height="8"/><rect x="86" y="88" width="9" height="8"/><rect x="76" y="97" width="9" height="8"/><rect x="86" y="97" width="9" height="8"/><rect x="76" y="106" width="9" height="8"/><rect x="86" y="106" width="9" height="8"/></g></svg>

<!-- Strings / Factors -->
<div class="p" style="left:690px;top:798px;width:322px;height:282px"></div>
<div class="h" style="left:707px;top:806px;width:143px;height:23px;font-size:18px;line-height:23px">Strings</div>
<div class="see" style="left:856px;top:808px;width:144px;height:20px;font-size:10px;line-height:20px">Also see the <b>stringr</b> package.</div>
<div class="c" style="left:695px;top:838px;width:154px;text-align:right;font-size:9px">paste(x, y, sep = ' ')</div>
<div class="c" style="left:695px;top:858px;width:154px;text-align:right;font-size:9px">paste(x, collapse = ' ')</div>
<div class="c" style="left:695px;top:878px;width:154px;text-align:right;font-size:9px">grep(pattern, x)</div>
<div class="c" style="left:695px;top:898px;width:154px;text-align:right;font-size:9px">gsub(pattern, replace, x)</div>
<div class="c cen" style="left:695px;top:918px;width:164px;font-size:9px">toupper(x)</div>
<div class="c cen" style="left:695px;top:938px;width:164px;font-size:9px">tolower(x)</div>
<div class="c cen" style="left:695px;top:958px;width:164px;font-size:9px">nchar(x)</div>
<div class="d" style="left:858px;top:839px;font-size:8px">Join multiple vectors together.</div>
<div class="d" style="left:858px;top:859px;font-size:8px">Join elements of a vector together.</div>
<div class="d" style="left:858px;top:879px;font-size:8px">Find regular expression matches in x.</div>
<div class="d" style="left:858px;top:899px;font-size:8px">Replace matches in x with a string.</div>
<div class="d" style="left:858px;top:919px;font-size:8px">Convert to uppercase.</div>
<div class="d" style="left:858px;top:939px;font-size:8px">Convert to lowercase.</div>
<div class="d" style="left:858px;top:959px;font-size:8px">Number of characters in a string.</div>
<div class="h" style="left:779px;top:982px;width:142px;height:24px;font-size:18px;line-height:24px">Factors</div>
<div class="c cen" style="left:700px;top:1015px;width:182px;font-size:11.5px">factor(x)</div>
<div class="cen d" style="left:700px;top:1031px;width:182px;font-size:10px;line-height:14.5px">Turn a vector into a factor. Can<br>set the levels of the factor and<br>the order.</div>
<div class="c cen" style="left:838px;top:1016px;width:174px;font-size:11.5px">cut(x, breaks = 4)</div>
<div class="cen d" style="left:838px;top:1032px;width:174px;font-size:10px;line-height:14.5px">Turn a numeric vector into a<br>factor by ‘cutting’ into<br>sections.</div>

<!-- Statistics -->
<div class="h" style="left:800px;top:1088px;width:105px;height:23px;font-size:18px;line-height:23px">Statistics</div>
<div style="left:693px;top:1121px;width:157px;height:125px;border:2px dotted #ccc"></div>
<div class="c cen" style="left:693px;top:1127px;width:161px;font-size:10px">lm(y ~ x, data=df)</div>
<div class="cen d" style="left:693px;top:1141px;width:161px;font-size:9px">Linear model.</div>
<div class="c cen" style="left:693px;top:1165px;width:161px;font-size:10px">glm(y ~ x, data=df)</div>
<div class="cen d" style="left:693px;top:1180px;width:161px;font-size:9px">Generalised linear model.</div>
<div class="c cen" style="left:693px;top:1205px;width:161px;font-size:10px">summary</div>
<div class="cen d" style="left:693px;top:1218px;width:161px;font-size:9px;line-height:13px">Get more detailed information<br>out a model.</div>
<div class="c cen" style="left:846px;top:1131px;width:82px;font-size:10px">t.test(x, y)</div>
<div class="cen d" style="left:846px;top:1146px;width:82px;font-size:8.5px;line-height:13px">Perform a t-test for<br>difference between<br>means.</div>
<div class="c cen" style="left:836px;top:1197px;width:102px;font-size:10px">pairwise.t.test</div>
<div class="cen d" style="left:846px;top:1211px;width:82px;font-size:8.5px;line-height:13px">Perform a t-test for<br>paired data.</div>
<div class="c cen" style="left:936px;top:1127px;width:74px;font-size:10px">prop.test</div>
<div class="cen d" style="left:936px;top:1142px;width:74px;font-size:8.5px;line-height:13px">Test for a<br>difference<br>between<br>proportions.</div>
<div class="c cen" style="left:936px;top:1205px;width:74px;font-size:10px">aov</div>
<div class="cen d" style="left:936px;top:1219px;width:74px;font-size:8.5px;line-height:13px">Analysis of<br>variance.</div>

<!-- Distributions -->
<div class="h" style="left:782px;top:1257px;width:138px;height:24px;font-size:18px;line-height:24px">Distributions</div>
<div style="left:755px;top:1289px;width:251px;height:122px;background:#ddd"></div>
<div style="left:692px;top:1319px;width:64px;height:92px;background:#ddd"></div>
<div class="w" style="left:756px;top:1290px;width:62px;height:29px"></div><div class="w" style="left:819px;top:1290px;width:59px;height:29px"></div><div class="w" style="left:879px;top:1290px;width:60px;height:29px"></div><div class="w" style="left:940px;top:1290px;width:65px;height:29px"></div>
<div class="w" style="left:693px;top:1320px;width:62px;height:22px"></div>
<div class="w" style="left:693px;top:1343px;width:62px;height:22px"></div>
<div class="w" style="left:693px;top:1366px;width:62px;height:22px"></div>
<div class="w" style="left:693px;top:1389px;width:62px;height:21px"></div>
<div style="left:756px;top:1320px;width:249px;height:22px;background:#e4e5e7"></div>
<div class="w" style="left:756px;top:1343px;width:249px;height:22px"></div>
<div style="left:756px;top:1366px;width:249px;height:22px;background:#e4e5e7"></div>
<div class="w" style="left:756px;top:1389px;width:249px;height:21px"></div>
<div style="left:818px;top:1320px;width:1px;height:90px;background:#ddd"></div><div style="left:878px;top:1320px;width:1px;height:90px;background:#ddd"></div><div style="left:939px;top:1320px;width:1px;height:90px;background:#ddd"></div>
<div class="d" style="left:759px;top:1292px;font-size:9px;line-height:13px">Random<br>Variates</div>
<div class="d" style="left:821px;top:1292px;font-size:9px;line-height:13px">Density<br>Function</div>
<div class="d" style="left:881px;top:1292px;font-size:9px;line-height:13px">Cumulative<br>Distribution</div>
<div class="d" style="left:943px;top:1299px;font-size:9px">Quantile</div>
<div class="cen d" style="left:693px;top:1324px;width:62px;font-size:10px">Normal</div>
<div class="cen d" style="left:693px;top:1347px;width:62px;font-size:10px">Poisson</div>
<div class="cen d" style="left:693px;top:1370px;width:62px;font-size:10px">Binomial</div>
<div class="cen d" style="left:693px;top:1392px;width:62px;font-size:10px">Uniform</div>
<div class="c cen" style="left:756px;top:1324px;width:62px;font-size:9.5px">rnorm</div><div class="c cen" style="left:819px;top:1324px;width:59px;font-size:9.5px">dnorm</div><div class="c cen" style="left:879px;top:1324px;width:60px;font-size:9.5px">pnorm</div><div class="c cen" style="left:940px;top:1324px;width:65px;font-size:9.5px">qnorm</div>
<div class="c cen" style="left:756px;top:1347px;width:62px;font-size:9.5px">rpois</div><div class="c cen" style="left:819px;top:1347px;width:59px;font-size:9.5px">dpois</div><div class="c cen" style="left:879px;top:1347px;width:60px;font-size:9.5px">ppois</div><div class="c cen" style="left:940px;top:1347px;width:65px;font-size:9.5px">qpois</div>
<div class="c cen" style="left:756px;top:1370px;width:62px;font-size:9.5px">rbinom</div><div class="c cen" style="left:819px;top:1370px;width:59px;font-size:9.5px">dbinom</div><div class="c cen" style="left:879px;top:1370px;width:60px;font-size:9.5px">pbinom</div><div class="c cen" style="left:940px;top:1370px;width:65px;font-size:9.5px">qbinom</div>
<div class="c cen" style="left:756px;top:1392px;width:62px;font-size:9.5px">runif</div><div class="c cen" style="left:819px;top:1392px;width:59px;font-size:9.5px">dunif</div><div class="c cen" style="left:879px;top:1392px;width:60px;font-size:9.5px">punif</div><div class="c cen" style="left:940px;top:1392px;width:65px;font-size:9.5px">qunif</div>

<!-- Plotting / Dates -->
<div class="p" style="left:690px;top:1418px;width:322px;height:127px"></div>
<div class="h" style="left:695px;top:1427px;width:143px;height:24px;font-size:18px;line-height:24px">Plotting</div>
<div class="see" style="left:850px;top:1429px;width:153px;height:20px;font-size:10px;line-height:20px">Also see the <b>ggplot2</b> package.</div>
<svg style="position:absolute;left:701px;top:1467px" width="34" height="34" viewBox="0 0 34 34">
<rect x="0.5" y="0.5" width="33" height="33" fill="#fff" stroke="#333"/>
<path d="M4.5 1V33M8.5 1V33M12.5 1V33M16.5 1V33M20.5 1V33M24.5 1V33M28.5 1V33M1 4.5H33M1 8.5H33M1 12.5H33M1 16.5H33M1 20.5H33M1 24.5H33M1 28.5H33" stroke="#bbb" stroke-width="0.5"/>
<g fill="#7a3fa0"><circle cx="4" cy="19" r="2"/><circle cx="9" cy="14" r="2"/><circle cx="13" cy="10" r="2"/><circle cx="16" cy="15" r="2"/><circle cx="19" cy="20" r="2"/><circle cx="23" cy="26" r="2"/><circle cx="27" cy="25" r="2"/></g></svg>
<div class="c cen" style="left:735px;top:1463px;width:64px;font-size:10.5px">plot(x)</div>
<div class="cen d" style="left:735px;top:1478px;width:64px;font-size:9px;line-height:13px">Values of x in<br>order.</div>
<svg style="position:absolute;left:805px;top:1467px" width="34" height="34" viewBox="0 0 34 34">
<rect x="0.5" y="0.5" width="33" height="33" fill="#fff" stroke="#333"/>
<path d="M4.5 1V33M8.5 1V33M12.5 1V33M16.5 1V33M20.5 1V33M24.5 1V33M28.5 1V33M1 4.5H33M1 8.5H33M1 12.5H33M1 16.5H33M1 20.5H33M1 24.5H33M1 28.5H33" stroke="#bbb" stroke-width="0.5"/>
<g fill="#7a3fa0"><circle cx="4" cy="28" r="2"/><circle cx="8" cy="27" r="2"/><circle cx="5" cy="19" r="2"/><circle cx="12" cy="18" r="2"/><circle cx="17" cy="18" r="2"/><circle cx="19" cy="12" r="2"/><circle cx="25" cy="10" r="2"/><circle cx="28" cy="5" r="2"/><circle cx="23" cy="5" r="2"/></g></svg>
<div class="c cen" style="left:842px;top:1463px;width:70px;font-size:10px">plot(x, y)</div>
<div class="cen d" style="left:842px;top:1478px;width:70px;font-size:9px;line-height:13px">Values of x<br>against y.</div>
<svg style="position:absolute;left:913px;top:1466px" width="36" height="36" viewBox="0 0 36 36">
<rect x="0.5" y="0.5" width="35" height="35" fill="#fff" stroke="#333"/>
<path d="M4.5 1V35M8.5 1V35M12.5 1V35M16.5 1V35M20.5 1V35M24.5 1V35M28.5 1V35M32.5 1V35M1 4.5H35M1 8.5H35M1 12.5H35M1 16.5H35M1 20.5H35M1 24.5H35M1 28.5H35M1 32.5H35" stroke="#bbb" stroke-width="0.5"/>
<path d="M1 35V28H9V22H17V14H24V8H29V35Z" fill="#6b3b9e"/></svg>
<div class="c cen" style="left:950px;top:1463px;width:60px;font-size:10.5px">hist(x)</div>
<div class="cen d" style="left:950px;top:1478px;width:60px;font-size:9px;line-height:13px">Histogram of<br>x.</div>
<div class="p" style="left:690px;top:1512px;width:322px;height:33px"></div>
<div class="h" style="left:695px;top:1518px;width:143px;height:24px;font-size:18px;line-height:24px">Dates</div>
<div class="see" style="left:862px;top:1520px;width:140px;height:20px;font-size:10px;line-height:20px">See the <b>lubridate</b> package.</div>

<!-- footer bottom -->
<div class="d" style="left:12px;top:1550px;font-size:7.5px">RStudio® is a trademark of RStudio, Inc. • <u class="b">CC BY</u> Mhairi McNeill • mhairihmcneill@gmail.com • 844-448-1212 • <u>rstudio.com</u></div>
<div class="d" style="left:700px;top:1550px;width:314px;text-align:right;font-size:7.5px">Learn more at <b style="color:#222">web page or vignette</b> • package version • Updated: 3/15</div>

</div></body></html>
